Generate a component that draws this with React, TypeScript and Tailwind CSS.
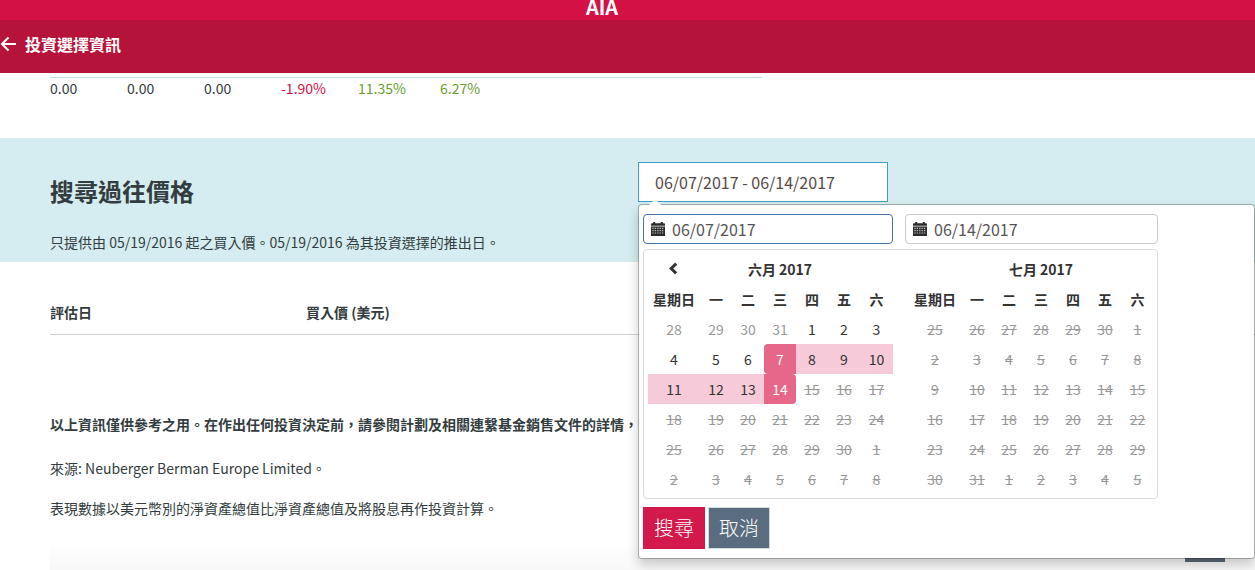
import React, { useState } from "react";

type Tone = "plain" | "down" | "up";

type Figure = {
  value: string;
  width: string;
  tone: Tone;
};

type Month = {
  name: string;
  hasPrev: boolean;
  days: number[];
  // index of the first day of the month shown
  firstDay: number;
  // index from which the days can't be picked
  disabledFrom: number;
};

const figures: Figure[] = [
  { value: "0.00", width: "w-[77px]", tone: "plain" },
  { value: "0.00", width: "w-[77px]", tone: "plain" },
  { value: "0.00", width: "w-[77px]", tone: "plain" },
  { value: "-1.90%", width: "w-[77px]", tone: "down" },
  { value: "11.35%", width: "w-[82px]", tone: "up" },
  { value: "6.27%", width: "w-[80px]", tone: "up" },
];

const weekdays = ["星期日", "一", "二", "三", "四", "五", "六"];

const range = (from: number, to: number) =>
  Array.from({ length: to - from + 1 }, (_, i) => from + i);

const june: Month = {
  name: "六月 2017",
  hasPrev: true,
  days: [...range(28, 31), ...range(1, 30), ...range(1, 8)],
  firstDay: 4,
  disabledFrom: 18,
};

const july: Month = {
  name: "七月 2017",
  hasPrev: false,
  days: [...range(25, 30), ...range(1, 31), ...range(1, 5)],
  firstDay: 6,
  disabledFrom: 0,
};

const getToneClass = (tone: Tone) => {
  switch (tone) {
    case "down":
      return "text-[#d31145]";
    case "up":
      return "text-[#689c2f]";
    default:
      return "text-[#333d40]";
  }
};

const CalendarIcon = () => (
  <svg width="14" height="14" viewBox="0 0 14 14" className="-mt-px shrink-0">
    <path
      fill="#2b2b2b"
      d="M0 2.500Q0 1.300 1 1.300h1.200V0h2v1.300h5.600V0h2v1.300H13q1 0 1 1.200v1.300H0zM0 4.400h14V14H0z"
    />
    <path
      stroke="#bbb"
      strokeWidth="1.200"
      strokeDasharray="1.400 1"
      fill="none"
      d="M1.300 6.400h11.600M1.300 8.700h11.600M1.300 11h11.600"
    />
  </svg>
);

type DateFieldProps = {
  value: string;
  active: boolean;
  onClick: () => void;
};

const DateField: React.FC<DateFieldProps> = ({ value, active, onClick }) => {
  return (
    <div
      className={`flex h-[30px] items-center rounded border bg-white pl-[7px] text-base text-[#555] ${
        active ? "w-[250px] border-[#4475a5]" : "w-[253px] border-[#ccc]"
      }`}
      onClick={onClick}
    >
      <CalendarIcon />
      <span className="pl-[7px]">{value}</span>
    </div>
  );
};

type MonthViewProps = {
  month: Month;
  start?: number;
  end?: number;
};

const MonthView: React.FC<MonthViewProps> = ({ month, start, end }) => {
  const getDayClass = (index: number) => {
    if (index === start) return "rounded-l bg-[#e76788] text-white";
    if (index === end) return "rounded-r bg-[#e76788] text-white";
    if (start !== undefined && end !== undefined && index > start && index < end)
      return "bg-[#f6cad8] text-[#333]";
    if (index >= month.disabledFrom) return "text-[#999] line-through";
    if (index < month.firstDay) return "text-[#999]";
    return "text-[#333]";
  };

  return (
    <div className="w-[245px] text-center text-sm leading-[30px] text-[#333]">
      <div className="grid h-[30px] grid-cols-[52px_160px_1fr] font-bold">
        <span className="flex items-center justify-center">
          {month.hasPrev && (
            <svg width="10" height="13" viewBox="0 0 10 13" className="-mt-0.5 -ml-0.5">
              <path d="M8.200 1.700 3.200 6.500l5 4.800" fill="none" stroke="#333" strokeWidth="3" />
            </svg>
          )}
        </span>
        <span>{month.name}</span>
      </div>
      <div className="grid h-[30px] grid-cols-[52px_repeat(5,32px)_33px] font-bold">
        {weekdays.map((day) => (
          <span key={day}>{day}</span>
        ))}
      </div>
      <div className="grid grid-cols-[52px_repeat(5,32px)_33px]">
        {month.days.map((day, index) => (
          <span key={index} className={`h-[30px] ${getDayClass(index)}`}>
            {day}
          </span>
        ))}
      </div>
    </div>
  );
};

const RangePicker = () => {
  const [from] = useState("06/07/2017");
  const [to] = useState("06/14/2017");
  const [, setActiveField] = useState("from");

  return (
    <div className="absolute top-[42px] left-0 z-10 h-[355px] w-[617px] rounded border border-black/25 bg-white bg-clip-padding px-1 pt-[9px] leading-6 shadow-[0_6px_12px_rgba(0,0,0,0.2)]">
      <svg width="14" height="8" viewBox="0 0 14 8" className="absolute -top-[7px] left-[9px]">
        <path d="M0 8 7 1l7 7" fill="#fff" />
      </svg>
      <div className="flex gap-3">
        <DateField value={from} active onClick={() => setActiveField("from")} />
        <DateField value={to} active={false} onClick={() => setActiveField("to")} />
      </div>
      <div className="mt-[5px] flex h-[250px] w-[515px] gap-4 rounded border border-[#ddd] p-1">
        <MonthView month={june} start={10} end={17} />
        <MonthView month={july} />
      </div>
      <div className="mt-2 flex gap-[3px] text-xl font-light text-white">
        <button className="h-[42px] w-[62px] bg-[#d3184b]">搜尋</button>
        <button className="h-[42px] w-[62px] border border-[#d5dade] bg-[#596c80]">取消</button>
      </div>
    </div>
  );
};

const App = () => {
  return (
    <div className="h-[570px] w-full overflow-hidden bg-white font-['Noto_Sans_CJK_TC',sans-serif] text-sm text-[#333d40]">
      <div className="flex h-5 items-end justify-center bg-[#d31145] pr-[51px] text-white">
        <span className="text-xl leading-[26px] font-bold">AIA</span>
      </div>
      <header className="flex h-[53px] items-center bg-[#b6133b] pb-1.5 text-white">
        <svg width="17" height="18" viewBox="0 0 17 18">
          <path d="M16 9H2.500M8.500 2.500 2 9l6.500 6.500" fill="none" stroke="#fff" strokeWidth="2" />
        </svg>
        <h1 className="pl-2 text-base leading-6 font-bold">投資選擇資訊</h1>
      </header>

      <section className="h-[65px] pt-1 pl-[50px]">
        <div className="flex w-[712px] border-t border-[#cbdcdc] leading-5">
          {figures.map(({ value, width, tone }, index) => (
            <span key={index} className={`${width} ${getToneClass(tone)}`}>
              {value}
            </span>
          ))}
        </div>
      </section>

      <section className="flex h-[124px] bg-[#d5edf0] pl-[50px]">
        <div className="w-[588px] pt-[35px]">
          <h2 className="text-2xl leading-9 font-bold">搜尋過往價格</h2>
          <p className="mt-[23px] leading-5">
            只提供由 05/19/2016 起之買入價。05/19/2016 為其投資選擇的推出日。
          </p>
        </div>
        <div className="relative mt-6 h-10 w-[250px] border border-[#3c9fc3] bg-white pl-4 text-base leading-[38px] text-[#554848]">
          06/07/2017 - 06/14/2017
          <div className="absolute -top-px -left-px">
            <RangePicker />
          </div>
        </div>
      </section>

      <section className="pt-10 pl-[50px]">
        <div className="flex h-[33px] border-b border-[#d2d2d2] leading-5 font-bold">
          <span className="w-64">評估日</span>
          <span>買入價 (美元)</span>
        </div>
        <p className="mt-[79px] leading-5 font-bold whitespace-nowrap">
          以上資訊僅供參考之用。在作出任何投資決定前，請參閱計劃及相關連繫基金銷售文件的詳情，
        </p>
        <p className="mt-6 leading-5">來源: Neuberger Berman Europe Limited。</p>
        <p className="mt-5 leading-5">表現數據以美元幣別的淨資產總值比淨資產總值及將股息再作投資計算。</p>
      </section>

      <div className="mt-6 ml-[50px] flex h-[29px] justify-end bg-linear-to-b from-white to-[#f8f8f8] pr-[30px]">
        <span className="h-5 w-10 bg-[#5c6776]" />
      </div>
    </div>
  );
};

export default App;
